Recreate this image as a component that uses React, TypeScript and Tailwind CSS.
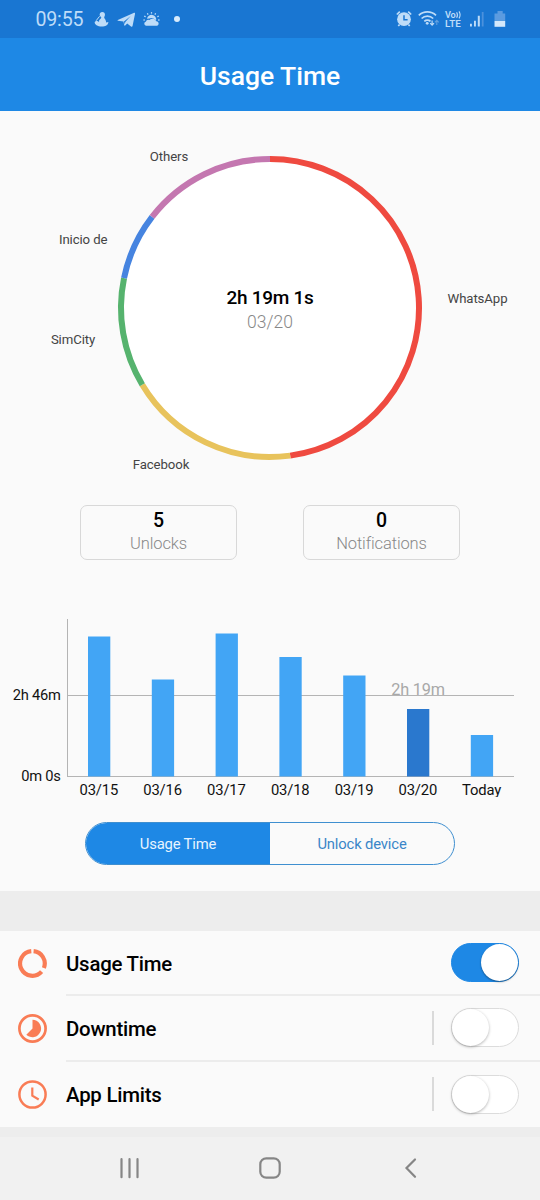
import type { ReactNode } from "react";
import clsx from "clsx";

const CX = 270;
const CY = 197;
const RADIUS = 149;

const slices = [
  { name: "WhatsApp", from: 0, to: 172.2, color: "#ef4a40", x: 477.5, y: 192 },
  { name: "Facebook", from: 172.2, to: 239, color: "#e8c35c", x: 161, y: 358.4 },
  { name: "SimCity", from: 239, to: 281.6, color: "#56b36e", x: 73, y: 233 },
  { name: "Inicio de", from: 281.6, to: 307.7, color: "#4684e0", x: 83.2, y: 132.5 },
  { name: "Others", from: 307.7, to: 360, color: "#c477b0", x: 169, y: 50 },
];

const days = [
  { label: "03/15", height: 140 },
  { label: "03/16", height: 97 },
  { label: "03/17", height: 143 },
  { label: "03/18", height: 119.5 },
  { label: "03/19", height: 101 },
  { label: "03/20", height: 67.5, selected: true },
  { label: "Today", height: 41.5 },
];

function arc(from: number, to: number) {
  const point = (deg: number) => {
    const rad = (deg * Math.PI) / 180;
    return `${CX + RADIUS * Math.sin(rad)} ${CY - RADIUS * Math.cos(rad)}`;
  };
  return `M${point(from)} A${RADIUS} ${RADIUS} 0 ${to - from > 180 ? 1 : 0} 1 ${point(to)}`;
}

function StatusBar() {
  return (
    <div className="flex h-[38px] items-center bg-[#1976d2] pl-[35.5px] text-[#bedcf8]">
      <span className="w-[58.5px] pt-px text-[19.6px] leading-[38px] tracking-[-0.2px]">09:55</span>
      <svg width="84" height="38" viewBox="94 0 84 38" fill="currentColor" className="-mr-px">
        {/* seated figure */}
        <circle cx="102.3" cy="14.6" r="2.6" />
        <path d="M100.4 15.5c1 1.2 1.2 2.1.2 3.2-1.3.9-1.8 2-1.5 3.2l-2.6-1.3-1.8 1.5c-.4 2.4 3 4.5 7.1 4.5 3.6 0 6.2-1.2 6.6-4.6l-2.3.6c.1-1.8-.7-3.2-1.9-4.6l.2-2.8z" />
        <path d="M99.6 16.3 96.2 20.6" stroke="currentColor" strokeWidth="1" />
        {/* telegram */}
        <path d="M117.8 20 133.6 12.9c1-.4 1.6.1 1.4 1.1l-2.4 11.8c-.2.9-.8 1.2-1.6.6l-3.8-2.9-2 2c-.5.4-.9.3-1-.4l-.7-3.6-5.6-.8c-.5-.2-.6-.5-.1-.7zm6.2 1.5.7 3 .6-2.6 5.4-5.8z" />
        {/* weather */}
        <path d="M146 25.7a2 2 0 0 1-.3-3.9 3 3 0 0 1 3.8-1.7 4 4 0 0 1 6.8 1.2 2.3 2.3 0 0 1 1 4.4z" />
        <path d="M147 18.8a4.6 4.6 0 0 1 9.2 1.4l-1.2-.6a5.2 5.2 0 0 0-5.8-1z" />
        <g stroke="currentColor" strokeWidth="1.4" strokeLinecap="round">
          <path d="M151.5 12.8v.3M147.6 13.8l.2.3M155.4 13.8l-.2.3M144.8 16.3l.3.2M158.2 16.3l-.3.2M144 20h.2M159 20h-.3" />
        </g>
      </svg>
      <span className="-ml-[3px] size-[5.5px] rounded-full bg-[#d8ebfc]" />
      <svg width="144" height="38" viewBox="396 0 144 38" fill="currentColor" className="ml-auto">
        {/* alarm */}
        <circle cx="404" cy="19.2" r="6.9" />
        <path d="M404 15.2v4.6h3.6" fill="none" stroke="#1976d2" strokeWidth="1.5" />
        <path
          d="M396.8 14.5l3-2.8M411.2 14.5l-3-2.8M399.6 24.5l-1.3 1.5M408.4 24.5l1.3 1.5"
          stroke="currentColor"
          strokeWidth="1.7"
        />
        {/* wifi */}
        <g fill="none" stroke="currentColor" strokeWidth="1.7">
          <path d="M418.8 15.4a12.4 12.4 0 0 1 17.2 0M421.6 18.5a8.3 8.3 0 0 1 11.6 0M424.3 21.4a4.6 4.6 0 0 1 6.2 0" />
        </g>
        <circle cx="427.2" cy="23.3" r="1.4" />
        <path d="M432.1 20.5v4.2M430.2 23.1l1.9 2 1.9-2" fill="none" stroke="currentColor" strokeWidth="1.2" />
        <path d="M436.8 25v-4.4M434.9 22.3l1.9-2 1.9 2" fill="none" stroke="#609fdf" strokeWidth="1.1" />
        <text x="445" y="17.9" fontSize="9.2" fontWeight="600" textLength="10.8">Vo</text>
        <path
          d="M456.6 12.2q1.7 2.8 0 5.6M459 11.4q2.2 3.5 0 7"
          fill="none"
          stroke="currentColor"
          strokeWidth="1.1"
        />
        <text x="445" y="26.8" fontSize="9.8" fontWeight="600" textLength="15.7" lengthAdjust="spacingAndGlyphs">
          LTE
        </text>
        {/* signal */}
        <path d="M470 23.7h1.9v2.8H470zM474 20.7h1.9v5.8H474zM477.8 15.7h2v10.8h-2z" />
        <path d="M481.8 12h1.8v14.5h-1.8z" fill="#4b91dc" />
        {/* battery */}
        <path d="M494.5 13.5h3V11h5.2v2.5h2.5v7h-10.7z" fill="#5b9be0" />
        <path d="M494.5 20.8h10.7v6h-10.7z" fill="#d4e8fb" />
      </svg>
    </div>
  );
}

function UsageDonut() {
  return (
    <svg width="540" height="384" className="block">
      <circle cx={CX} cy={CY} r={RADIUS} fill="#fff" />
      {slices.map((s) => (
        <path key={s.name} d={arc(s.from, s.to)} fill="none" stroke={s.color} strokeWidth="6" />
      ))}
      {slices.map((s) => (
        <text key={s.name} x={s.x} y={s.y} fontSize="13.2" letterSpacing="-0.1" fill="#444" textAnchor="middle">
          {s.name}
        </text>
      ))}
      <text x={CX} y="193.3" fontSize="19" fontWeight="500" letterSpacing="-0.3" textAnchor="middle">
        2h 19m 1s
      </text>
      <text x={CX} y="217" fontSize="17.5" fontWeight="300" fill="#888" textAnchor="middle">
        03/20
      </text>
    </svg>
  );
}

function StatCard({ value, label }: { value: number; label: string }) {
  return (
    <div className="flex h-[55px] w-[157.5px] flex-col items-center rounded-[7px] border-[1.5px] border-[#d8d8d8] pt-[4px]">
      <span className="text-[19.5px] font-medium leading-[22px]">{value}</span>
      <span className="mt-px text-[16.5px] font-light leading-[22px] tracking-[-0.12px] text-[#888]">
        {label}
      </span>
    </div>
  );
}

function WeekChart() {
  return (
    <svg width="540" height="194" className="mt-[50px] block">
      <clipPath id="today">
        <rect x="450" y="168" width="64" height="19" />
      </clipPath>
      <path d="M67.5 9v158M67 166.5h447M67 85.5h447" stroke="#b4b4b4" />
      <g fontSize="14.7" letterSpacing="-0.25" fill="#111" textAnchor="end">
        <text x="60.6" y="89.7">2h 46m</text>
        <text x="60.6" y="171.2">0m 0s</text>
      </g>
      {days.map((d, i) => (
        <g key={d.label}>
          <rect
            x={88 + i * 63.8}
            y={166.5 - d.height}
            width="22.3"
            height={d.height}
            fill={d.selected ? "#2a78ce" : "#42a5f5"}
          />
          <text
            x={98.8 + i * 63.8}
            y="185.4"
            fontSize="14.8"
            letterSpacing="-0.15"
            fill="#111"
            textAnchor="middle"
            clipPath={d.label === "Today" ? "url(#today)" : undefined}
          >
            {d.label}
          </text>
        </g>
      ))}
      <text x="418" y="84.5" fontSize="16.3" letterSpacing="-0.2" fill="#a8a8a8" textAnchor="middle">
        2h 19m
      </text>
    </svg>
  );
}

function ModeTabs() {
  return (
    <div className="ml-[85px] mt-[18px] flex h-[42.5px] w-[370px] overflow-hidden rounded-full border border-[#3f8fd0] text-[14.8px] leading-[41px] tracking-[-0.15px]">
      <button className="w-1/2 bg-[#1e88e5] pt-px text-[#e8f4ff]">Usage Time</button>
      <button className="w-1/2 pt-px text-[#3a86c8]">Unlock device</button>
    </div>
  );
}

function Toggle({ on }: { on?: boolean }) {
  return (
    <div
      className={clsx(
        "flex h-[39px] w-[68px] items-center rounded-full border",
        on ? "justify-end border-[#1e88e5] bg-[#1e88e5]" : "border-[#dcdcdc] bg-white"
      )}
    >
      <div
        className={clsx(
          "size-[37px] rounded-full bg-white",
          on
            ? "shadow-[0_1px_2px_rgba(0,0,0,0.4)]"
            : "shadow-[0_1px_3px_rgba(0,0,0,0.3)]"
        )}
      />
    </div>
  );
}

function SettingRow({ icon, label, on, last }: { icon: ReactNode; label: string; on?: boolean; last?: boolean }) {
  return (
    <div className="flex h-[65.5px] items-center pl-[18px]">
      <svg width="29" height="29" viewBox="0 0 29 29" fill="none" stroke="#f97c55">
        {icon}
      </svg>
      <div
        className={clsx(
          "ml-[19px] flex h-full flex-1 items-center pr-[21px]",
          !last && "border-b-2 border-[#ececec]"
        )}
      >
        <span className={clsx("text-[20.4px] font-medium tracking-[-0.22px]", on ? "pt-[4px]" : "pt-[3px]")}>
          {label}
        </span>
        <div className="ml-auto flex items-center">
          {!on && <div className="mr-[17px] h-[34px] w-[2px] bg-[#dadada]" />}
          <Toggle on={on} />
        </div>
      </div>
    </div>
  );
}

function NavBar() {
  return (
    <div className="flex h-[63px] items-center bg-[#f1f1f1]">
      <svg width="540" height="63" fill="none" stroke="#868686" strokeWidth="2.2" strokeLinecap="round">
        <path d="M121.5 22.2v18M129.5 22.2v18M137.5 22.2v18" />
        <rect x="260.3" y="21.3" width="19.4" height="19.4" rx="6" />
        <path d="M415 22.5 406.5 31l8.5 8.8" />
      </svg>
    </div>
  );
}

export default function App() {
  return (
    <div className="h-[1200px] w-[540px] overflow-hidden bg-[#fafafa] font-['Roboto',sans-serif] text-black">
      <StatusBar />
      <header className="flex h-[73px] items-center justify-center bg-[#1e88e5] pt-[2px] text-[26.5px] font-medium text-white">
        Usage Time
      </header>

      <main className="h-[780px]">
        <UsageDonut />
        <div className="mt-[10px] flex justify-center gap-[65.5px]">
          <StatCard value={5} label="Unlocks" />
          <StatCard value={0} label="Notifications" />
        </div>
        <WeekChart />
        <ModeTabs />
      </main>

      <div className="h-[39.5px] bg-[#ededed]" />

      <section>
        <SettingRow
          label="Usage Time"
          on
          icon={
            <g strokeWidth="4.2">
              <path d="M15.6 2.2A12.3 12.3 0 0 1 25.9 18.9" />
              <path d="M23.6 22.6A12.3 12.3 0 1 1 13.3 2.2" />
            </g>
          }
        />
        <SettingRow
          label="Downtime"
          icon={
            <>
              <circle cx="14.5" cy="14.5" r="13.1" strokeWidth="2.7" />
              <path d="M14.5 14.5V5.8a8.7 8.7 0 1 1-6.2 14.9z" fill="#f97c55" stroke="none" />
            </>
          }
        />
        <SettingRow
          label="App Limits"
          last
          icon={
            <>
              <circle cx="14.5" cy="14.5" r="13.1" strokeWidth="2.5" />
              <path d="M14.3 7.5v8.2l6.4 3.8" strokeWidth="2.2" />
            </>
          }
        />
      </section>

      <div className="h-[10px] bg-[#ededed]" />
      <NavBar />
    </div>
  );
}
